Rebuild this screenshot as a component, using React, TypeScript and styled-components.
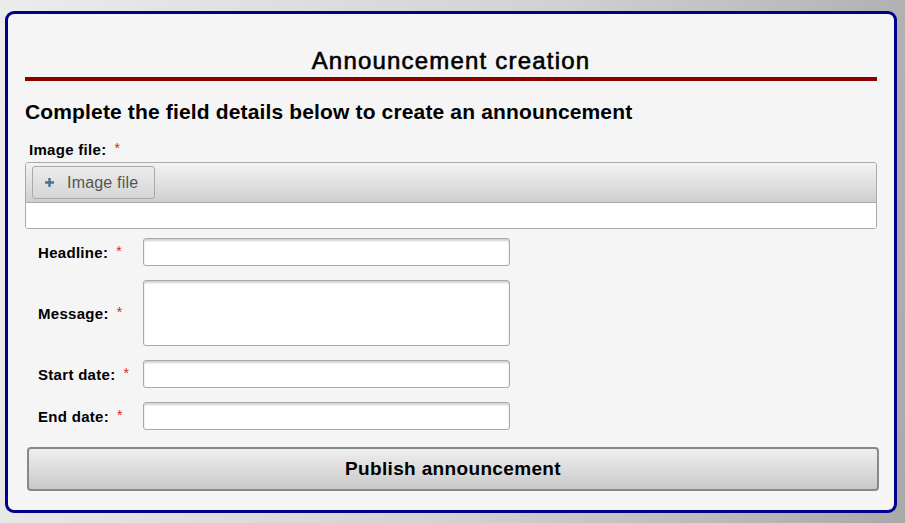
import React from "react";
import styled, { createGlobalStyle } from "styled-components";

const GlobalStyle = createGlobalStyle`
  html, body {
    margin: 0;
    padding: 0;
  }
  body {
    width: 905px;
    height: 523px;
    overflow: hidden;
    font-family: "Liberation Sans", Arial, sans-serif;
    background: linear-gradient(100deg, #ececec 0%, #d2d2d2 55%, #a9a9a9 100%);
  }
`;

const Panel = styled.div`
  box-sizing: border-box;
  margin: 11px 0 0 5px;
  width: 892px;
  height: 502px;
  border: 3px solid #00008b;
  border-radius: 9px;
  background: #f5f5f5;
  padding: 33px 17px 0 17px;
`;

const Title = styled.h1`
  margin: 0;
  font-size: 24px;
  font-weight: normal;
  line-height: 28px;
  letter-spacing: 1.2px;
  text-align: center;
  color: #000;
  padding-bottom: 2px;
  border-bottom: 4px solid #8b0000;
  -webkit-text-stroke: 0.6px #000;
`;

const Subtitle = styled.h2`
  margin: 19px 0 0 0;
  font-size: 21px;
  line-height: 24px;
  letter-spacing: 0.15px;
  font-weight: bold;
  color: #000;
`;

const FieldLabel = styled.span`
  font-size: 15px;
  letter-spacing: 0.3px;
  font-weight: bold;
  color: #000;
`;

const Required = styled.span`
  color: #e02020;
  font-weight: normal;
  font-size: 14px;
  margin-left: 8px;
  vertical-align: 2px;
`;

const UploadLabel = styled.div`
  margin: 15px 0 0 4px;
  line-height: 18px;
`;

const Upload = styled.div`
  margin-top: 3px;
  border: 1px solid #aaa;
  border-radius: 3px;
  overflow: hidden;
`;

const UploadBar = styled.div`
  height: 40px;
  box-sizing: border-box;
  padding: 3px 6px;
  background: linear-gradient(#f3f3f3, #cfcfcf);
  border-bottom: 1px solid #aaa;
`;

const UploadButton = styled.button`
  box-sizing: border-box;
  height: 33px;
  width: 123px;
  display: flex;
  align-items: center;
  gap: 13px;
  padding: 0 0 0 12px;
  border: 1px solid #aaa;
  border-radius: 3px;
  background: linear-gradient(#ececec, #d6d6d6);
  font-family: "Liberation Sans", Arial, sans-serif;
  font-size: 16px;
  letter-spacing: 0.2px;
  color: #555;
`;

const UploadBody = styled.div`
  height: 25px;
  background: #fff;
`;

const FormGrid = styled.div`
  margin: 9px 0 0 13px;
  display: grid;
  grid-template-columns: 105px 367px;
  row-gap: 14px;
  align-items: center;
`;

const Input = styled.input`
  box-sizing: border-box;
  width: 367px;
  height: 28px;
  border: 1px solid #aaa;
  border-radius: 3px;
  background: #fff;
  box-shadow: inset 0 2px 2px rgba(0, 0, 0, 0.18);
  outline: none;
`;

const TextArea = styled.textarea`
  box-sizing: border-box;
  width: 367px;
  height: 66px;
  border: 1px solid #aaa;
  border-radius: 3px;
  background: #fff;
  box-shadow: inset 0 2px 2px rgba(0, 0, 0, 0.18);
  resize: none;
  outline: none;
  display: block;
`;

const PublishButton = styled.button`
  display: block;
  box-sizing: border-box;
  margin: 17px 0 0 2px;
  width: 852px;
  height: 44px;
  border: 2px solid #888;
  border-radius: 4px;
  background: linear-gradient(#efefef, #c9c9c9);
  font-family: "Liberation Sans", Arial, sans-serif;
  font-size: 19px;
  letter-spacing: 0.35px;
  font-weight: bold;
  color: #000;
`;

function PlusIcon() {
  return (
    <svg width="9" height="9" viewBox="0 0 9 9">
      <path d="M3.3 0h2.4v3.3H9v2.4H5.7V9H3.3V5.7H0V3.3h3.3z" fill="#4d7090" />
    </svg>
  );
}

const fields = [
  { label: "Headline:", multi: false },
  { label: "Message:", multi: true },
  { label: "Start date:", multi: false },
  { label: "End date:", multi: false },
];

export default function App() {
  return (
    <>
      <GlobalStyle />
      <Panel>
        <Title>Announcement creation</Title>
        <Subtitle>Complete the field details below to create an announcement</Subtitle>
        <UploadLabel>
          <FieldLabel>Image file:</FieldLabel>
          <Required>*</Required>
        </UploadLabel>
        <Upload>
          <UploadBar>
            <UploadButton>
              <PlusIcon />
              Image file
            </UploadButton>
          </UploadBar>
          <UploadBody />
        </Upload>
        <FormGrid>
          {fields.map((f) => (
            <React.Fragment key={f.label}>
              <div>
                <FieldLabel>{f.label}</FieldLabel>
                <Required>*</Required>
              </div>
              {f.multi ? <TextArea /> : <Input />}
            </React.Fragment>
          ))}
        </FormGrid>
        <PublishButton>Publish announcement</PublishButton>
      </Panel>
    </>
  );
}
